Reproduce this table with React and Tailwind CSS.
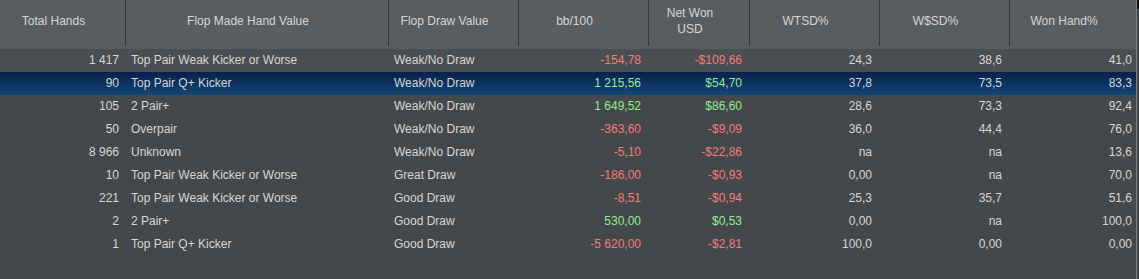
import React from 'react';

const cols = [
    { w: 'w-[126px]', head: ['Total Hands'], align: 'text-right pr-[7px]' },
    { w: 'w-[263px]', head: ['Flop Made Hand Value'], align: 'text-left pl-[5px]' },
    { w: 'w-[130px]', head: ['Flop Draw Value'], align: 'text-left pl-[5px]' },
    { w: 'w-[130px]', head: ['bb/100'], align: 'text-right pr-[8px]' },
    { w: 'w-[101px]', head: ['Net Won', 'USD'], align: 'text-right pr-[8px]' },
    { w: 'w-[130px]', head: ['WTSD%'], align: 'text-right pr-[8px]' },
    { w: 'w-[130px]', head: ['W$SD%'], align: 'text-right pr-[8px]' },
    { w: 'w-[126px]', head: ['Won Hand%'], align: 'text-right pr-[4px]' },
];

const rows = [
    ['1 417', 'Top Pair Weak Kicker or Worse', 'Weak/No Draw', '-154,78', '-$109,66', '24,3', '38,6', '41,0'],
    ['90', 'Top Pair Q+ Kicker', 'Weak/No Draw', '1 215,56', '$54,70', '37,8', '73,5', '83,3'],
    ['105', '2 Pair+', 'Weak/No Draw', '1 649,52', '$86,60', '28,6', '73,3', '92,4'],
    ['50', 'Overpair', 'Weak/No Draw', '-363,60', '-$9,09', '36,0', '44,4', '76,0'],
    ['8 966', 'Unknown', 'Weak/No Draw', '-5,10', '-$22,86', 'na', 'na', '13,6'],
    ['10', 'Top Pair Weak Kicker or Worse', 'Great Draw', '-186,00', '-$0,93', '0,00', 'na', '70,0'],
    ['221', 'Top Pair Weak Kicker or Worse', 'Good Draw', '-8,51', '-$0,94', '25,3', '35,7', '51,6'],
    ['2', '2 Pair+', 'Good Draw', '530,00', '$0,53', '0,00', 'na', '100,0'],
    ['1', 'Top Pair Q+ Kicker', 'Good Draw', '-5 620,00', '-$2,81', '100,0', '0,00', '0,00'],
];

function cellColor(i, v) {
    if (i === 3 || i === 4) return v.startsWith('-') ? 'text-[#f47c7c]' : 'text-[#90ee90]';
    return 'text-[#d6d6d6]';
}

export default function App() {
    return (
        <div className="w-[1139px] h-[279px] bg-[#45484b] flex text-[12px] font-['Liberation_Sans',Arial,sans-serif] overflow-hidden">
            <div className="w-[1136px] flex flex-col">
                {/* header */}
                <div className="flex h-[49px] bg-[#5a5d60] text-[#d3d6d9] shrink-0">
                    {cols.map((c, i) => (
                        <div key={i} className={`${c.w} h-full`}>
                            <div className={`h-[46px] flex flex-col items-center justify-center pb-[4px] pr-[18px] leading-[16px] ${i < cols.length - 1 ? 'border-r border-[#333537]' : ''}`}>
                                {c.head.map((h) => (
                                    <span key={h}>{h}</span>
                                ))}
                            </div>
                        </div>
                    ))}
                </div>
                {/* body */}
                {rows.map((r, ri) => (
                    <div
                        key={ri}
                        className={`flex h-[23px] items-center shrink-0 ${
                            ri === 1
                                ? 'bg-gradient-to-b from-[#07204b] to-[#154574]'
                                : ri === 0
                                ? 'bg-[#4b4e51]'
                                : ''
                        }`}
                    >
                        {r.map((v, i) => (
                            <div key={i} className={`${cols[i].w} ${cols[i].align} ${cellColor(i, v)} whitespace-nowrap leading-[23px]`}>
                                {v}
                            </div>
                        ))}
                    </div>
                ))}
            </div>
            <div className="w-[1px] h-full bg-[#7a7d80]" />
            <div className="w-[2px] h-full bg-[#45484b] flex flex-col">
                <div className="h-[9px] bg-[#111]" />
            </div>
        </div>
    );
}
